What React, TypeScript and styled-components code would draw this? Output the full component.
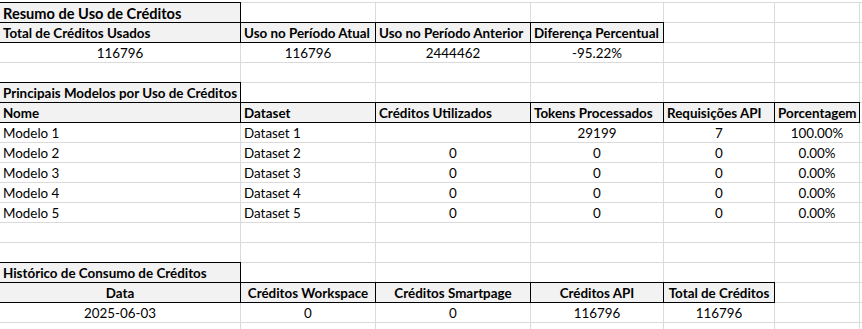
import React from "react";
import styled, { createGlobalStyle } from "styled-components";

const GlobalStyle = createGlobalStyle`
  html, body {
    margin: 0;
    padding: 0;
    background: #ffffff;
  }
  body {
    font-family: Lato, "Liberation Sans", sans-serif;
    overflow: hidden;
  }
`;

type Kind = "plain" | "title" | "header";
type Align = "left" | "center";

interface CellData {
  text: string;
  kind: Kind;
  align: Align;
  size?: number;
}

const Sheet = styled.div`
  display: grid;
  grid-template-columns: 240px 134px 154px 132px 110px 84px 1fr;
  grid-auto-rows: 19px;
  gap: 1px;
  padding-top: 1px;
  margin-top: 2px;
  width: 862px;
  height: 327px;
  overflow: hidden;
  background: #dadada;
`;

const Cell = styled.div<{ $kind: Kind; $align: Align; $size: number }>`
  position: relative;
  box-sizing: border-box;
  background: ${(p) => (p.$kind === "plain" ? "#ffffff" : "#f2f2f2")};
  outline: ${(p) => (p.$kind === "plain" ? "none" : "1px solid #000000")};
  z-index: ${(p) => (p.$kind === "plain" ? 0 : 1)};
  font-size: ${(p) => p.$size}px;
  line-height: 19px;
  font-weight: ${(p) => (p.$kind === "plain" ? 400 : 700)};
  color: #000000;
  text-align: ${(p) => p.$align};
  padding: 1px 3px 0 3px;
  white-space: nowrap;
  overflow: hidden;
`;

const e: CellData = { text: "", kind: "plain", align: "left" };
const title = (t: string, size?: number): CellData => ({ text: t, kind: "title", align: "left", size });
const hl = (t: string): CellData => ({ text: t, kind: "header", align: "left" });
const hc = (t: string): CellData => ({ text: t, kind: "header", align: "center" });
const l = (t: string): CellData => ({ text: t, kind: "plain", align: "left" });
const c = (t: string): CellData => ({ text: t, kind: "plain", align: "center" });

const emptyRow: CellData[] = [e, e, e, e, e, e, e];

const models = [1, 2, 3, 4, 5].map((n) =>
  n === 1
    ? [l("Modelo 1"), l("Dataset 1"), c(""), c("29199"), c("7"), c("100.00%"), e]
    : [l(`Modelo ${n}`), l(`Dataset ${n}`), c("0"), c("0"), c("0"), c("0.00%"), e]
);

const rows: CellData[][] = [
  [title("Resumo de Uso de Créditos", 14.6), e, e, e, e, e, e],
  [
    hl("Total de Créditos Usados"),
    hl("Uso no Período Atual"),
    hl("Uso no Período Anterior"),
    hl("Diferença Percentual"),
    e,
    e,
    e,
  ],
  [c("116796"), c("116796"), c("2444462"), c("-95.22%"), e, e, e],
  emptyRow,
  [title("Principais Modelos por Uso de Créditos"), e, e, e, e, e, e],
  [
    hl("Nome"),
    hl("Dataset"),
    hl("Créditos Utilizados"),
    hl("Tokens Processados"),
    hl("Requisições API"),
    hl("Porcentagem"),
    e,
  ],
  ...models,
  emptyRow,
  emptyRow,
  [title("Histórico de Consumo de Créditos"), e, e, e, e, e, e],
  [
    hc("Data"),
    hc("Créditos Workspace"),
    hc("Créditos Smartpage"),
    hc("Créditos API"),
    hc("Total de Créditos"),
    e,
    e,
  ],
  [c("2025-06-03"), c("0"), c("0"), c("116796"), c("116796"), e, e],
  emptyRow,
];

export default function App() {
  return (
    <>
      <GlobalStyle />
      <Sheet>
        {rows.map((row, r) =>
          row.map((cell, i) => (
            <Cell
              key={`${r}-${i}`}
              $kind={cell.kind}
              $align={cell.align}
              $size={cell.size ?? 13.4}
            >
              {cell.text}
            </Cell>
          ))
        )}
      </Sheet>
    </>
  );
}
